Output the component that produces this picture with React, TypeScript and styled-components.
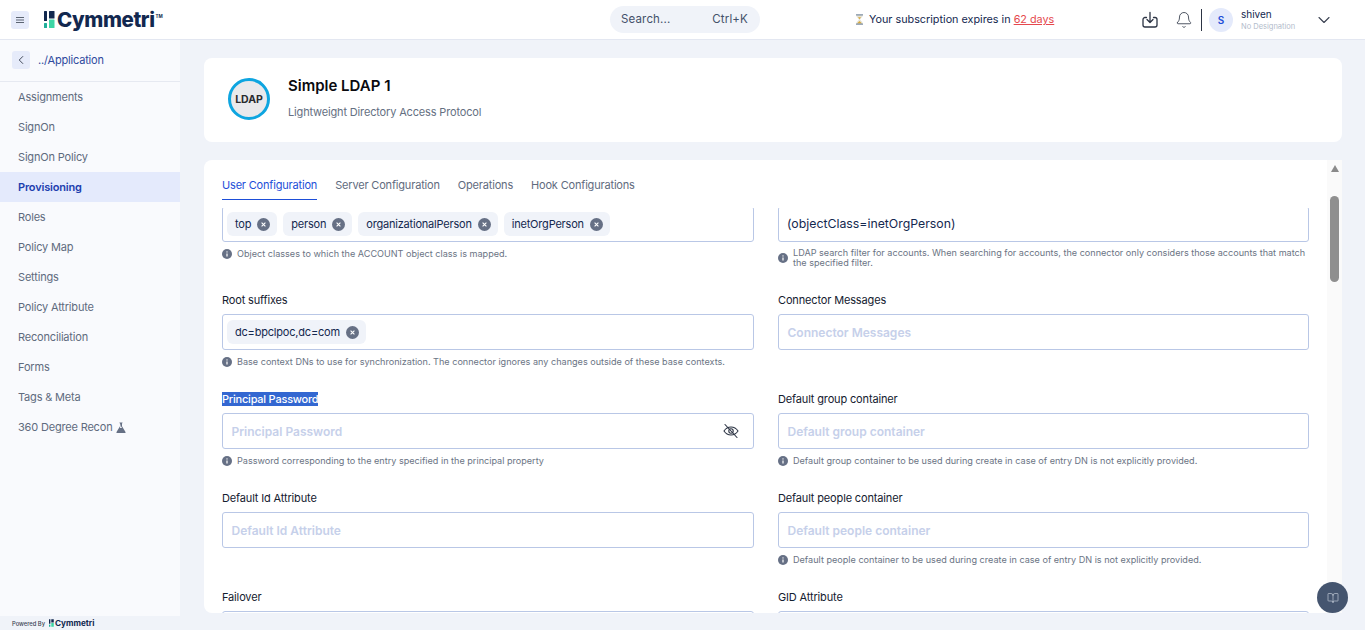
import React from "react";
import styled, { createGlobalStyle } from "styled-components";
import { Bell, BookOpen, ChevronDown, ChevronLeft } from "lucide-react";

const GlobalStyle = createGlobalStyle`
  html, body {
    margin: 0;
    height: 100%;
    overflow: hidden;
    background: #f0f3f9;
    font-family: Inter, "Liberation Sans", sans-serif;
  }
  * { box-sizing: border-box; }
`;

const Page = styled.div`
  position: relative;
  width: 1365px;
  height: 630px;
  display: flex;
  flex-direction: column;
  overflow: hidden;
`;

const Header = styled.header`
  height: 40px;
  flex: none;
  display: flex;
  align-items: center;
  background: #fff;
  border-bottom: 1px solid #e3e7f1;
`;

const Brand = styled.div`
  width: 610px;
  flex: none;
  display: flex;
  align-items: center;
  padding-left: 11px;
`;

const MenuButton = styled.button`
  width: 18px;
  height: 18px;
  padding: 0;
  border: 0;
  border-radius: 3px;
  background: #e6ebfa;
  display: flex;
  align-items: center;
  justify-content: center;
`;

const LogoMark = styled.svg`
  margin-left: 15px;
  flex: none;
`;

const LogoText = styled.span`
  margin-left: 2px;
  font-size: 20.5px;
  font-weight: 800;
  line-height: 30px;
  color: #12284f;
  letter-spacing: -0.4px;
`;

const LogoTm = styled.span`
  font-size: 4.5px;
  font-weight: 700;
  color: #12284f;
  align-self: flex-start;
  margin: 9px 0 0 1px;
  line-height: 6px;
`;

const SearchPill = styled.div`
  width: 150px;
  height: 27px;
  flex: none;
  margin-top: -1px;
  padding: 0 12px 0 11px;
  display: flex;
  align-items: center;
  justify-content: space-between;
  border-radius: 14px;
  background: #f0f3f9;
  font-size: 11.5px;
  letter-spacing: 0.15px;
  color: #44516a;
`;

const Notice = styled.div`
  margin-left: 95px;
  display: flex;
  align-items: center;
  gap: 5px;
  font-size: 10.8px;
  color: #14284f;
`;

const NoticeLink = styled.span`
  color: #e5484d;
  text-decoration: underline;
`;

const HeaderRight = styled.div`
  margin-left: auto;
  display: flex;
  align-items: center;
  width: 224px;
  flex: none;
`;

const IconSlot = styled.span<{ $offset?: number }>`
  width: 18px;
  margin-left: ${(p) => p.$offset ?? 0}px;
  flex: none;
  display: flex;
  justify-content: center;
  color: #2c3444;
`;

const Divider = styled.span`
  width: 1px;
  height: 22px;
  margin: 0 7px 0 8px;
  background: #2c3444;
  flex: none;
`;

const Avatar = styled.span`
  width: 24px;
  height: 24px;
  flex: none;
  border-radius: 50%;
  background: #e4eafb;
  color: #1d4ed8;
  font-size: 10px;
  font-weight: 600;
  display: flex;
  align-items: center;
  justify-content: center;
`;

const UserInfo = styled.div`
  margin-left: 8px;
  width: 73px;
  padding-top: 1px;
  display: flex;
  flex-direction: column;
`;

const UserName = styled.span`
  font-size: 10px;
  line-height: 13px;
  color: #14284f;
`;

const UserRole = styled.span`
  font-size: 7.5px;
  line-height: 11px;
  color: #b3bccb;
`;

const Body = styled.div`
  flex: 1;
  min-height: 0;
  display: flex;
`;

const SideColumn = styled.div`
  width: 180px;
  flex: none;
  display: flex;
  flex-direction: column;
`;

const Sidebar = styled.nav`
  flex: 1;
  background: #f9fafd;
`;

const BackRow = styled.div`
  height: 42px;
  padding: 0 0 1px 12px;
  display: flex;
  align-items: center;
  gap: 8px;
  border-bottom: 1px solid #e6e9f1;
  font-size: 11px;
  letter-spacing: -0.18px;
  color: #2f4a9e;
`;

const BackButton = styled.span`
  width: 18px;
  height: 18px;
  border-radius: 3px;
  background: #e6ebfa;
  color: #2c3444;
  display: flex;
  align-items: center;
  justify-content: center;
`;

const NavItem = styled.div<{ $active?: boolean }>`
  height: 30px;
  padding-left: 18px;
  display: flex;
  align-items: center;
  gap: 4px;
  font-size: 11px;
  letter-spacing: -0.18px;
  font-weight: ${(p) => (p.$active ? 600 : 400)};
  color: ${(p) => (p.$active ? "#1d40af" : "#5f6b7e")};
  background: ${(p) => (p.$active ? "#e4eafc" : "transparent")};
`;

const PoweredBar = styled.div`
  height: 14px;
  flex: none;
  padding-left: 12px;
  display: flex;
  align-items: center;
  font-size: 5.8px;
  font-weight: 500;
  color: #3a4252;
`;

const MiniMark = styled.svg`
  margin-left: 4px;
  flex: none;
`;

const MiniLogo = styled.span`
  margin-left: 1px;
  font-size: 8.2px;
  font-weight: 700;
  color: #12284f;
`;

const Main = styled.main`
  flex: 1;
  min-width: 0;
  padding: 18px 23px 0 24px;
  display: flex;
  flex-direction: column;
  gap: 18px;
`;

const AppCard = styled.section`
  height: 84px;
  flex: none;
  padding: 0 0 2px 24px;
  display: flex;
  align-items: center;
  gap: 18px;
  background: #fff;
  border-radius: 8px;
`;

const AppBadge = styled.div`
  width: 42px;
  height: 42px;
  flex: none;
  border: 3px solid #0ea5e0;
  border-radius: 50%;
  background: #e9e9ec;
  display: flex;
  align-items: center;
  justify-content: center;
  font-size: 10.5px;
  font-weight: 700;
  color: #2a2a2e;
`;

const TitleBlock = styled.div`
  margin-bottom: 2px;
`;

const AppTitle = styled.h1`
  margin: 0 0 9px;
  font-size: 15px;
  font-weight: 600;
  line-height: 20px;
  color: #0a0a0f;
`;

const AppSub = styled.p`
  margin: 0;
  font-size: 11px;
  letter-spacing: -0.16px;
  line-height: 15px;
  color: #657082;
`;

const ConfigCard = styled.section`
  height: 453px;
  flex: none;
  display: flex;
  background: #fff;
  border-radius: 8px 0 0 8px;
  overflow: hidden;
`;

const ConfigInner = styled.div`
  flex: 1;
  min-width: 0;
  display: flex;
  flex-direction: column;
  padding: 0 18px;
`;

const Tabs = styled.div`
  height: 48px;
  flex: none;
  padding-top: 16px;
  display: flex;
  gap: 18px;
`;

const Tab = styled.div<{ $active?: boolean }>`
  height: 24px;
  padding-top: 2px;
  font-size: 11px;
  letter-spacing: -0.18px;
  line-height: 15px;
  color: ${(p) => (p.$active ? "#1d4ed8" : "#5f6b7e")};
  border-bottom: ${(p) => (p.$active ? "1px solid #1d4ed8" : "0")};
`;

const FormViewport = styled.div`
  flex: 1;
  min-height: 0;
  overflow: hidden;
`;

const FormGrid = styled.div`
  margin-top: -23px;
  display: grid;
  grid-template-columns: 532px 531px;
  column-gap: 24px;
`;

const Field = styled.div`
  min-width: 0;
  padding-bottom: 25px;
`;

const Label = styled.div`
  height: 14px;
  margin: 0 0 7px;
  font-size: 11px;
  letter-spacing: -0.15px;
  line-height: 14px;
  color: #14202f;
`;

const SelectedLabel = styled.span`
  display: inline-block;
  background: #3367d1;
  color: #fff;
  font-weight: 500;
  letter-spacing: -0.22px;
`;

const InputBox = styled.div`
  height: 36px;
  padding: 0 14px 0 4px;
  display: flex;
  align-items: center;
  gap: 6px;
  border: 1px solid #b9c7e6;
  border-radius: 3px;
  background: #fff;
`;

const InputValue = styled.span`
  padding: 0 0 2px 4px;
  font-size: 12.3px;
  color: #14284f;
`;

const Placeholder = styled.span`
  padding-left: 4.5px;
  flex: 1;
  font-size: 12px;
  font-weight: 600;
  color: #c6d0ea;
`;

const Chip = styled.span`
  height: 24px;
  padding: 0 7px 0 8px;
  display: inline-flex;
  align-items: center;
  gap: 6px;
  border-radius: 6px;
  background: #f0f3f9;
  font-size: 11px;
  letter-spacing: -0.2px;
  color: #14284f;
`;

const Help = styled.div`
  margin-top: 6px;
  min-height: 11px;
  display: flex;
  align-items: center;
  gap: 5px;
  font-size: 9.1px;
  line-height: 10px;
  color: #6b7484;
`;

const ScrollTrack = styled.div`
  width: 15px;
  flex: none;
  background: #fafafa;
  display: flex;
  flex-direction: column;
  align-items: center;
`;

const ScrollArrow = styled.span`
  margin-top: 5px;
  width: 0;
  height: 0;
  border-left: 4.5px solid transparent;
  border-right: 4.5px solid transparent;
  border-bottom: 7px solid #8a8a8a;
`;

const ScrollThumb = styled.span`
  margin-top: 24px;
  width: 9px;
  height: 86px;
  border-radius: 5px;
  background: #8f8f8f;
`;

const HelpFab = styled.button`
  position: absolute;
  left: 1317px;
  top: 582px;
  width: 31px;
  height: 31px;
  padding: 0;
  border: 0;
  border-radius: 50%;
  background: #45556f;
  color: #d5dbe6;
  display: flex;
  align-items: center;
  justify-content: center;
`;

const CircleSvg = styled.svg`
  flex: none;
`;

const CloseDot = () => (
  <CircleSvg width="13" height="13" viewBox="0 0 13 13">
    <circle cx="6.5" cy="6.5" r="6.5" fill="#667085" />
    <path d="M4.6 4.6l3.8 3.8M8.4 4.6l-3.8 3.8" stroke="#fff" strokeWidth="1.1" />
  </CircleSvg>
);

const InfoDot = () => (
  <CircleSvg width="10" height="10" viewBox="0 0 10 10">
    <circle cx="5" cy="5" r="5" fill="#667085" />
    <path d="M5 4.4v3" stroke="#fff" strokeWidth="1.2" />
    <circle cx="5" cy="2.9" r=".7" fill="#fff" />
  </CircleSvg>
);

const Hourglass = () => (
  <svg width="9" height="11" viewBox="0 0 9 11">
    <path d="M1.5 1h6v1.5L5 5.5l2.5 3V10h-6V8.5L4 5.5 1.5 2.5z" fill="#e6e3d6" />
    <path d="M3 3.3h3L4.5 5.2zM2 9.5L4.5 7 7 9.5z" fill="#d9a93a" />
    <path d="M1 .8h7M1 10.2h7" stroke="#7d8fa3" strokeWidth="1.2" />
  </svg>
);

const TrayDownload = () => (
  <svg width="18" height="18" viewBox="0 0 18 18" fill="none" stroke="currentColor" strokeWidth="1.3" strokeLinecap="round" strokeLinejoin="round">
    <path d="M5.5 6.5H4a2 2 0 0 0-2 2V14a2 2 0 0 0 2 2h10a2 2 0 0 0 2-2V8.5a2 2 0 0 0-2-2h-1.5" />
    <path d="M9 1.5V11M6 8.5l3 3 3-3" />
  </svg>
);

const EyeSlash = () => (
  <svg width="16" height="16" viewBox="0 0 16 16" fill="none" stroke="#2c3444" strokeWidth="1.1" strokeLinecap="round">
    <path d="M1 8s2.6-4 7-4 7 4 7 4-2.6 4-7 4-7-4-7-4z" />
    <circle cx="8" cy="8" r="2.2" />
    <path d="M2 1.5l12 13" />
  </svg>
);

const Flask = () => (
  <svg width="10" height="11" viewBox="0 0 10 11">
    <path d="M3.5.5h3v.8H6v3L9.5 10a.6.6 0 0 1-.5.9H1a.6.6 0 0 1-.5-.9L4 4.3v-3h-.5z" fill="#667085" />
    <path d="M5 1.3v3L6 6H4z" fill="#f9fafd" />
  </svg>
);

const BrandBars = () => (
  <>
    <rect x="0" y="0" width="3" height="10" rx=".5" fill="#12284f" />
    <rect x="0" y="12" width="3" height="5" rx=".5" fill="#1fae9a" />
    <rect x="5" y="0" width="5.5" height="7.5" rx=".5" fill="#12284f" />
    <rect x="5" y="8.5" width="5.5" height="8.5" rx=".5" fill="#3ed6a5" />
  </>
);

const navItems = ["Assignments", "SignOn", "SignOn Policy", "Provisioning", "Roles", "Policy Map", "Settings", "Policy Attribute", "Reconciliation", "Forms", "Tags & Meta"];
const objectClasses = ["top", "person", "organizationalPerson", "inetOrgPerson"];
const tabs = ["User Configuration", "Server Configuration", "Operations", "Hook Configurations"];

const ChipRow = ({ items }: { items: string[] }) => (
  <InputBox>
    {items.map((item) => (
      <Chip key={item}>
        {item}
        <CloseDot />
      </Chip>
    ))}
  </InputBox>
);

const HelpText = ({ children }: { children: React.ReactNode }) => (
  <Help>
    <InfoDot />
    <span>{children}</span>
  </Help>
);

const PlainField = ({ name, help }: { name: string; help?: string }) => (
  <Field>
    <Label>{name}</Label>
    <InputBox>
      <Placeholder>{name}</Placeholder>
    </InputBox>
    {help && <HelpText>{help}</HelpText>}
  </Field>
);

// bottom row sits under the fold, only its label and top border show
const FoldField = ({ name }: { name: string }) => (
  <Field>
    <Label>{name}</Label>
    <InputBox />
  </Field>
);

export default function App() {
  return (
    <Page>
      <GlobalStyle />
      <Header>
        <Brand>
          <MenuButton aria-label="menu">
            <svg width="10" height="8" viewBox="0 0 10 8">
              <path d="M1 1.5h8M1 4h8M1 6.5h8" stroke="#5b6472" strokeWidth="1.2" />
            </svg>
          </MenuButton>
          <LogoMark width="11" height="17" viewBox="0 0 11 17">
            <BrandBars />
          </LogoMark>
          <LogoText>Cymmetri</LogoText>
          <LogoTm>TM</LogoTm>
        </Brand>
        <SearchPill>
          <span>Search...</span>
          <span>Ctrl+K</span>
        </SearchPill>
        <Notice>
          <Hourglass />
          <span>
            Your subscription expires in <NoticeLink>62 days</NoticeLink>
          </span>
        </Notice>
        <HeaderRight>
          <IconSlot><TrayDownload /></IconSlot>
          <IconSlot $offset={16}><Bell size={20} strokeWidth={1.1} /></IconSlot>
          <Divider />
          <Avatar>S</Avatar>
          <UserInfo>
            <UserName>shiven</UserName>
            <UserRole>No Designation</UserRole>
          </UserInfo>
          <ChevronDown size={20} strokeWidth={1.3} color="#3a4252" />
        </HeaderRight>
      </Header>
      <Body>
        <SideColumn>
          <Sidebar>
            <BackRow>
              <BackButton><ChevronLeft size={14} strokeWidth={1.5} /></BackButton>
              ../Application
            </BackRow>
            {navItems.map((item) => (
              <NavItem key={item} $active={item === "Provisioning"}>{item}</NavItem>
            ))}
            <NavItem>
              360 Degree Recon <Flask />
            </NavItem>
          </Sidebar>
          <PoweredBar>
            Powered By
            <MiniMark width="5" height="8" viewBox="0 0 11 17">
              <BrandBars />
            </MiniMark>
            <MiniLogo>Cymmetri</MiniLogo>
          </PoweredBar>
        </SideColumn>
        <Main>
          <AppCard>
            <AppBadge>LDAP</AppBadge>
            <TitleBlock>
              <AppTitle>Simple LDAP 1</AppTitle>
              <AppSub>Lightweight Directory Access Protocol</AppSub>
            </TitleBlock>
          </AppCard>
          <ConfigCard>
            <ConfigInner>
              <Tabs>
                {tabs.map((tab, i) => (
                  <Tab key={tab} $active={i === 0}>{tab}</Tab>
                ))}
              </Tabs>
              <FormViewport>
                <FormGrid>
                  <Field>
                    <Label />
                    <ChipRow items={objectClasses} />
                    <HelpText>Object classes to which the ACCOUNT object class is mapped.</HelpText>
                  </Field>
                  <Field>
                    <Label />
                    <InputBox>
                      <InputValue>(objectClass=inetOrgPerson)</InputValue>
                    </InputBox>
                    <HelpText>
                      LDAP search filter for accounts. When searching for accounts, the connector only considers those accounts that match the specified filter.
                    </HelpText>
                  </Field>
                  <Field>
                    <Label>Root suffixes</Label>
                    <ChipRow items={["dc=bpclpoc,dc=com"]} />
                    <HelpText>Base context DNs to use for synchronization. The connector ignores any changes outside of these base contexts.</HelpText>
                  </Field>
                  <PlainField name="Connector Messages" />
                  <Field>
                    <Label><SelectedLabel>Principal Password</SelectedLabel></Label>
                    <InputBox>
                      <Placeholder>Principal Password</Placeholder>
                      <EyeSlash />
                    </InputBox>
                    <HelpText>Password corresponding to the entry specified in the principal property</HelpText>
                  </Field>
                  <PlainField name="Default group container" help="Default group container to be used during create in case of entry DN is not explicitly provided." />
                  <PlainField name="Default Id Attribute" />
                  <PlainField name="Default people container" help="Default people container to be used during create in case of entry DN is not explicitly provided." />
                  <FoldField name="Failover" />
                  <FoldField name="GID Attribute" />
                </FormGrid>
              </FormViewport>
            </ConfigInner>
            <ScrollTrack>
              <ScrollArrow />
              <ScrollThumb />
            </ScrollTrack>
          </ConfigCard>
        </Main>
      </Body>
      <HelpFab aria-label="docs"><BookOpen size={12} strokeWidth={1.2} /></HelpFab>
    </Page>
  );
}
